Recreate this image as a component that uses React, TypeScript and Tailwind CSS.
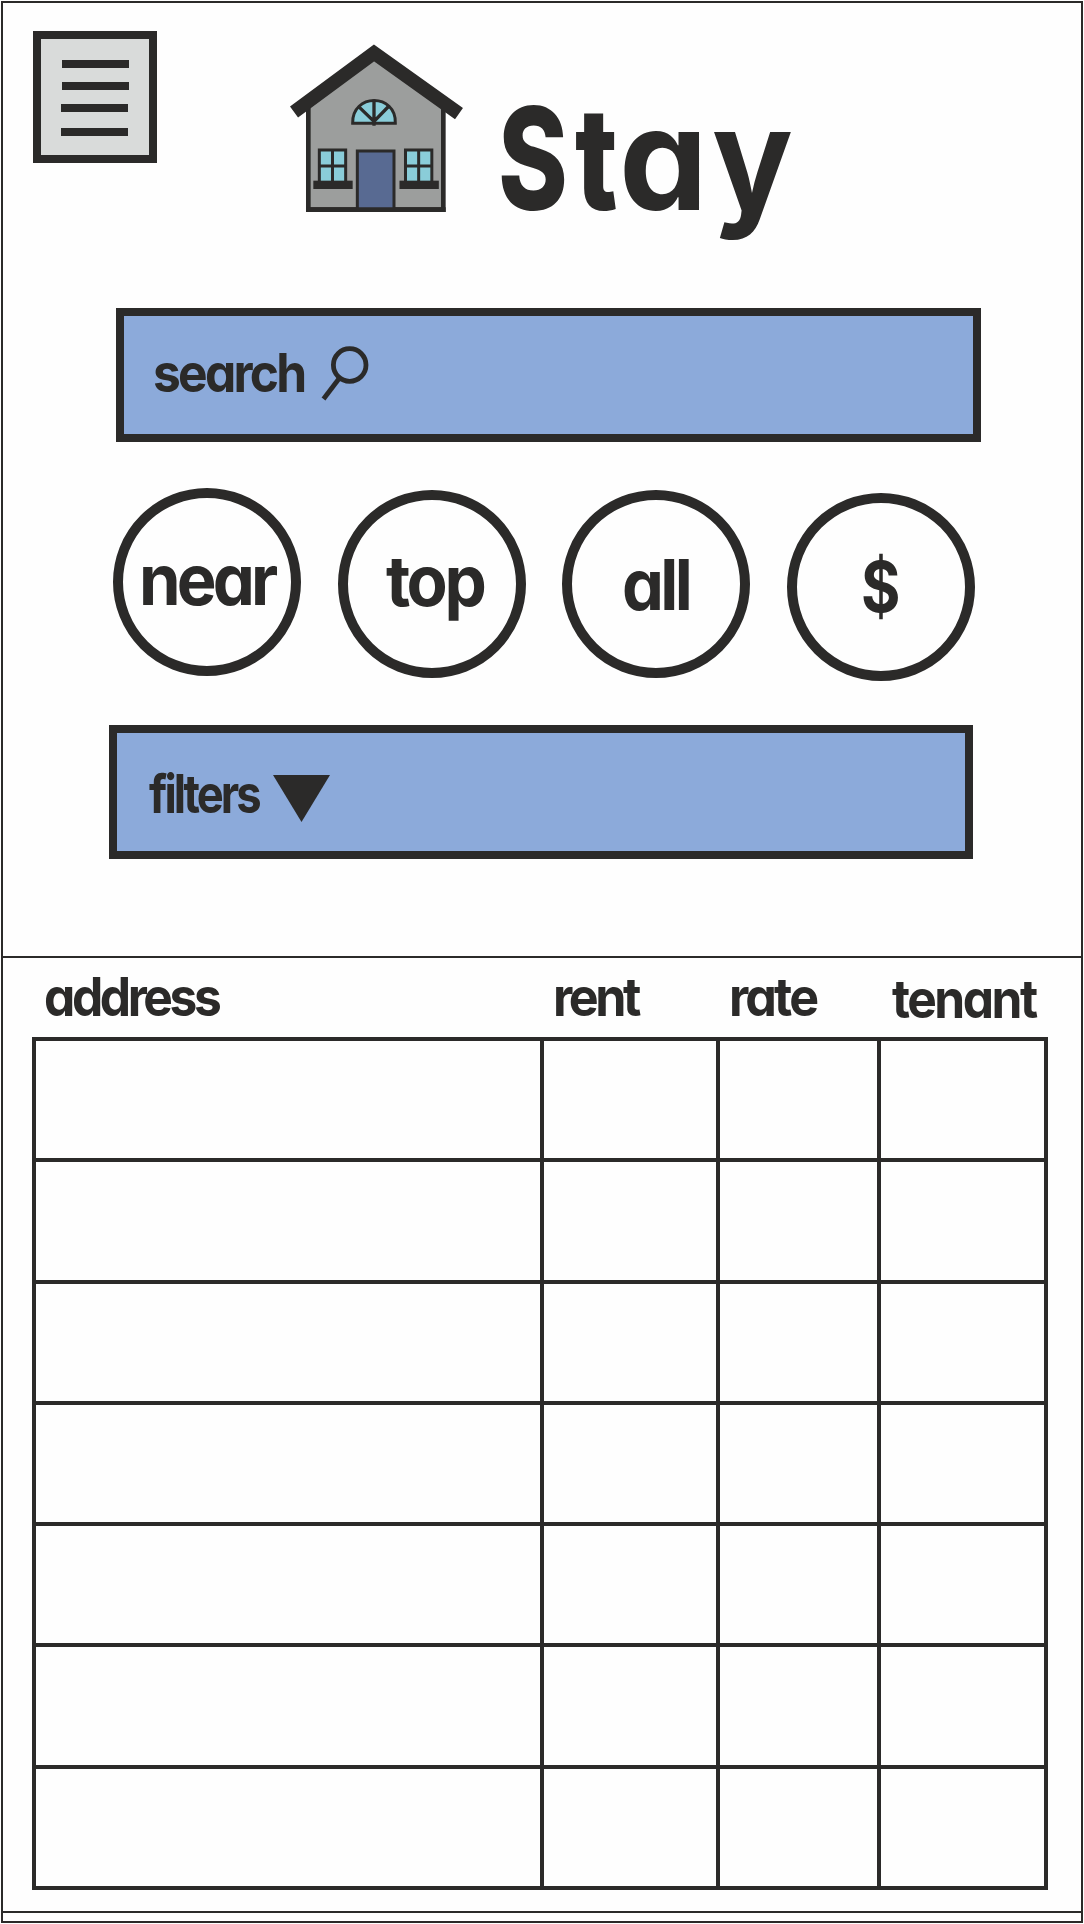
import type { ReactNode } from "react";

function Word({ className, children }: { className: string; children: ReactNode }) {
  return <span className={`block origin-left whitespace-nowrap ${className}`}>{children}</span>;
}

function MenuButton() {
  return (
    <button className="mt-[31px] ml-[33px] flex h-[132px] w-[124px] shrink-0 flex-col items-start justify-start border-8 border-[#2b2a29] bg-[#d9dbda] pt-[21px] pl-[20px]">
      <span className="ml-px block h-2 w-[67px] bg-[#2b2a29]" />
      <span className="mt-[13.500px] ml-px block h-2 w-[67px] bg-[#2b2a29]" />
      <span className="mt-[14.500px] block h-2 w-[67px] bg-[#2b2a29]" />
      <span className="mt-[15.500px] block h-2 w-[67px] bg-[#2b2a29]" />
    </button>
  );
}

function CottageWindow({ x }: { x: number }) {
  return (
    <g transform={`translate(${x} 0)`}>
      <rect x="18" y="361" width="79" height="98" fill="#8acdd9" stroke="#2b2a29" strokeWidth="9" />
      <path d="M57.500 361V459M18 409H98" stroke="#2b2a29" strokeWidth="9" />
      <rect y="453" width="118" height="25" fill="#2b2a29" />
    </g>
  );
}

function House() {
  return (
    <svg className="mt-[43.300px] h-[170px] w-[174.670px] shrink-0" viewBox="60 40 524 510" fill="none">
      <path d="M115 230L312 80L520 230V540H115Z" fill="#9c9e9d" stroke="#2b2a29" strokeWidth="14" />
      <path d="M72 247L312 70L567 252" stroke="#2b2a29" strokeWidth="41" />
      <path d="M248 281C245 190 380 190 376 281Z" fill="#8acdd9" stroke="#2b2a29" strokeWidth="9" />
      <path d="M312 210V288M266 231L312 275L357 229" stroke="#2b2a29" strokeWidth="10" />
      <rect x="262" y="364" width="110" height="176" fill="#586a92" stroke="#2b2a29" strokeWidth="9" />
      <CottageWindow x={130} />
      <CottageWindow x={388.5} />
      <path d="M108 540H527" stroke="#2b2a29" strokeWidth="14" />
    </svg>
  );
}

function MagnifierIcon() {
  return (
    <svg className="h-[57px] w-[48px]" viewBox="0 0 48 57" fill="none" stroke="#2b2a29">
      <circle cx="28.700" cy="20" r="16.300" strokeWidth="4.800" />
      <path d="M18.500 33L2.500 54" strokeWidth="4.800" />
    </svg>
  );
}

const rows = [0, 1, 2, 3, 4, 5, 6];

export default function App() {
  return (
    <div className="flex h-[1924px] w-[1084px] flex-col bg-[#fefefe] p-px font-['Inter',sans-serif] leading-none font-bold text-[#2b2a29] [font-feature-settings:'cv11']">
      <div className="flex h-[1922px] w-[1082px] flex-col border-2 border-[#2b2a29]">
        <section className="-mt-[3px] -ml-[3px] h-[956px] w-[1084px] shrink-0">
          <header className="flex h-[308px] items-start">
            <MenuButton />
            <div className="w-[133px] shrink-0" />
            <House />
            <h1 className="mt-[86px] ml-[33.600px] flex text-[143px]">
              <span className="w-[77.200px] origin-left scale-x-[0.74] font-extrabold">S</span>
              <span className="w-[43.500px] origin-left scale-x-[0.78] font-extrabold">t</span>
              <span className="w-[92.700px] origin-left scale-x-[0.985]">a</span>
              <span className="origin-left scale-x-[0.94]">y</span>
            </h1>
          </header>

          <div className="ml-[116px] flex h-[134px] w-[865px] items-start border-8 border-[#2b2a29] bg-[#8caada]">
            <div className="mt-[30px] ml-[29px] w-[168px] text-[54px]">
              <Word className="scale-x-[0.92] tracking-[-3px]">search</Word>
            </div>
            <div className="mt-[29px]">
              <MagnifierIcon />
            </div>
          </div>

          <nav className="mt-[46px] ml-[113px] flex items-start text-[70px]">
            <button className="flex size-[188px] shrink-0 items-start rounded-full border-10 border-[#2b2a29] pt-[46.500px] pl-[16px]">
              <Word className="scale-x-[0.955] tracking-[-4px]">near</Word>
            </button>
            <button className="mt-[1.500px] ml-[37px] flex size-[188px] shrink-0 items-start rounded-full border-10 border-[#2b2a29] pt-[46px] pl-[37.500px]">
              <Word className="scale-x-[0.96] tracking-[-3.500px]">top</Word>
            </button>
            <button className="mt-[2px] ml-[36px] flex size-[188px] shrink-0 items-start rounded-full border-10 border-[#2b2a29] pt-[49.500px] pl-[49.500px]">
              <Word className="scale-x-[0.95] tracking-[-3.800px]">all</Word>
            </button>
            <button className="mt-[5px] ml-[37px] flex size-[188px] shrink-0 items-start rounded-full border-10 border-[#2b2a29] pt-[49px] pl-[64px]">
              <Word className="scale-x-[0.86]">$</Word>
            </button>
          </nav>

          <div className="mt-[44px] ml-[109px] flex h-[134px] w-[864px] items-start border-8 border-[#2b2a29] bg-[#8caada]">
            <div className="mt-[34px] ml-[32px] w-[124px] text-[54px]">
              <Word className="scale-x-[0.84] tracking-[-3.600px]">filters</Word>
            </div>
            <svg className="mt-[42px] h-[47px] w-[57px]" viewBox="0 0 57 47">
              <path d="M0 0H57L28.500 47Z" fill="#2b2a29" />
            </svg>
          </div>
        </section>

        <section className="-ml-px h-[957px] w-[1080px] shrink-0 border-y-2 border-[#2b2a29]">
          <div className="flex h-[79px] items-start pt-[12px] pl-[41.500px] text-[54px]">
            <div className="w-[509.500px]">
              <Word className="scale-x-[0.92] tracking-[-3.700px]">address</Word>
            </div>
            <div className="w-[175.500px]">
              <Word className="scale-x-[0.93] tracking-[-3.700px]">rent</Word>
            </div>
            <div className="w-[163px]">
              <Word className="scale-x-[0.93] tracking-[-3.100px]">rate</Word>
            </div>
            <div className="pt-[2px]">
              <Word className="scale-x-[0.92] tracking-[-2.700px]">tenant</Word>
            </div>
          </div>
          <div className="ml-[30px] flex h-[853px] w-[1016px] flex-col border-t-4 border-l-4 border-[#2b2a29]">
            {rows.map((row) => (
              <div key={row} className="grid flex-1 grid-cols-[508px_176px_161px_167px]">
                {[0, 1, 2, 3].map((cell) => (
                  <div key={cell} className="border-r-4 border-b-4 border-[#2b2a29]" />
                ))}
              </div>
            ))}
          </div>
        </section>
      </div>
    </div>
  );
}
